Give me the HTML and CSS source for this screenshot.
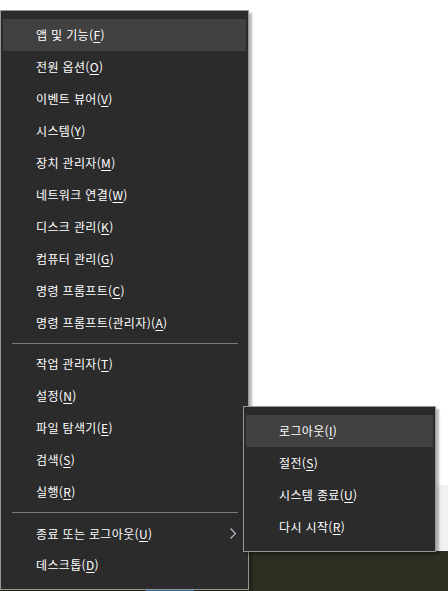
FILE: index.html
```html
<!DOCTYPE html>
<html lang="ko">
<head>
    <meta charset="UTF-8">
    <title>빠른 링크 메뉴</title>
    <link rel="stylesheet" href="styles.css">
</head>
<body>

    <div class="desktop">
        <div class="window"></div>
        <div class="window-bottom"></div>
        <div class="wallpaper"></div>
        <div class="taskbar-mark"></div>
    </div>

    <!-- Win+X menu -->
    <div class="menu main-menu">
        <div class="item active">앱 및 기능(<u>F</u>)</div>
        <div class="item">전원 옵션(<u>O</u>)</div>
        <div class="item">이벤트 뷰어(<u>V</u>)</div>
        <div class="item">시스템(<u>Y</u>)</div>
        <div class="item">장치 관리자(<u>M</u>)</div>
        <div class="item">네트워크 연결(<u>W</u>)</div>
        <div class="item">디스크 관리(<u>K</u>)</div>
        <div class="item">컴퓨터 관리(<u>G</u>)</div>
        <div class="item">명령 프롬프트(<u>C</u>)</div>
        <div class="item">명령 프롬프트(관리자)(<u>A</u>)</div>
        <div class="separator"></div>
        <div class="item">작업 관리자(<u>T</u>)</div>
        <div class="item">설정(<u>N</u>)</div>
        <div class="item">파일 탐색기(<u>E</u>)</div>
        <div class="item">검색(<u>S</u>)</div>
        <div class="item">실행(<u>R</u>)</div>
        <div class="separator"></div>
        <div class="item has-sub">
            <span>종료 또는 로그아웃(<u>U</u>)</span>
            <svg class="chevron" width="8" height="11" viewBox="0 0 8 11">
                <polyline points="1.5,0.5 6.5,5.5 1.5,10.5" fill="none" stroke="#b9c3cf" stroke-width="1.1"/>
            </svg>
        </div>
        <div class="item">데스크톱(<u>D</u>)</div>
    </div>

    <!-- shutdown submenu -->
    <div class="menu sub-menu">
        <div class="item active">로그아웃(<u>I</u>)</div>
        <div class="item">절전(<u>S</u>)</div>
        <div class="item">시스템 종료(<u>U</u>)</div>
        <div class="item">다시 시작(<u>R</u>)</div>
    </div>

</body>
</html>
```

FILE: styles.css
```css
body {
    margin: 0;
    width: 448px;
    height: 591px;
    overflow: hidden;
    position: relative;
    font-family: "Noto Sans CJK KR", "Noto Sans", sans-serif;
    font-size: 12px;
}
.desktop {
    display: flex;
    flex-direction: column;
    height: 591px;
}
.window {
    height: 485px;
    background: #ffffff;
}
.window-bottom {
    height: 66px;
    background: #f0f0f0;
}
.wallpaper {
    flex: 1;
    background: #2d2d21;
}
.taskbar-mark {
    position: absolute;
    left: 146px;
    top: 590px;
    width: 48px;
    height: 1px;
    background: #4d8fd6;
}
.menu {
    position: absolute;
    background: #2b2b2b;
    border: 1px solid #979797;
    padding: 8px 0;
    box-shadow: 3px 3px 2px rgba(0, 0, 0, 0.28);
}
.main-menu {
    left: 0;
    top: 10px;
    width: 247px;
    height: 562px;
}
.sub-menu {
    left: 243px;
    top: 406px;
    width: 191px;
    height: 128px;
}
.item {
    height: 32px;
    line-height: 31px;
    margin: 0 2px;
    padding-left: 33px;
    color: #ffffff;
    letter-spacing: 0.35px;
    white-space: nowrap;
}
.item u {
    text-decoration-thickness: 1px;
    text-underline-offset: 2px;
}
.item.active {
    background: #414141;
}
.item.has-sub {
    display: flex;
    align-items: center;
    justify-content: space-between;
    padding-right: 9px;
}
.chevron {
    display: block;
}
.separator {
    height: 1px;
    margin: 4px 10px 4px 11px;
    background: #7a7a7a;
}
```
